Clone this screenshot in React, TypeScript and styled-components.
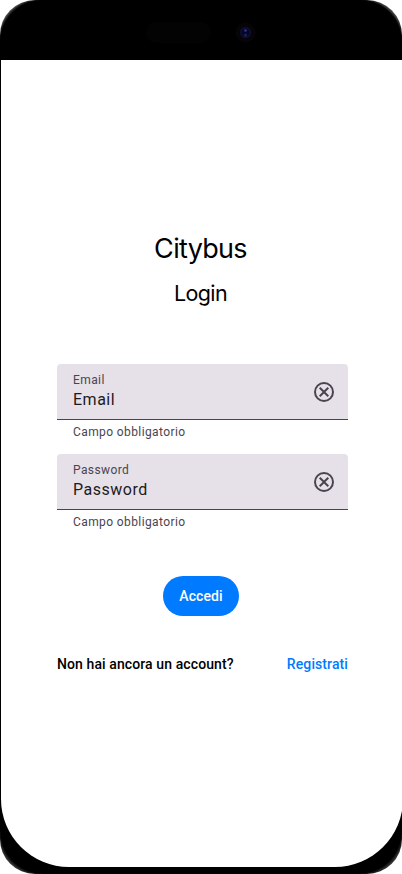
import React from "react";
import styled, { createGlobalStyle } from "styled-components";

const GlobalStyle = createGlobalStyle`
  *, *::before, *::after { box-sizing: border-box; }
  body { margin: 0; background: #fff; overflow: hidden; }
`;

const Device = styled.main`
  width: 402px;
  height: 874px;
  padding: 0 0 7px 1px;
  overflow: hidden;
  border-radius: 35px;
  background:
    radial-gradient(circle at 42px 42px, #000 41.5px, #505050 44.5px) 0 0 / 42px 42px no-repeat,
    radial-gradient(circle at 0 42px, #000 41.5px, #505050 44.5px) 100% 0 / 42px 42px no-repeat,
    radial-gradient(circle at 42px 0, #000 41px, #3c3c3c 44.5px) 0 100% / 42px 42px no-repeat,
    radial-gradient(circle at 0 0, #000 41px, #3c3c3c 44.5px) 100% 100% / 42px 42px no-repeat,
    #000;
  font-family: Roboto, sans-serif;
  display: flex;
  flex-direction: column;
`;

const StatusArea = styled.header`
  flex: none;
  height: 60px;
  padding: 22px 0 0 145px;
  display: flex;
  align-items: flex-start;
`;

const Speaker = styled.div`
  flex: none;
  width: 65px;
  height: 21px;
  border-radius: 11px;
  background: #030303;
`;

const Camera = styled.svg`
  flex: none;
  margin: 0 0 0 24px;
`;

const Screen = styled.section`
  flex: none;
  width: 402px;
  height: 807px;
  padding: 172px 55px 0 56px;
  border-radius: 0 0 68px 68px;
  background: #fff;
  display: flex;
  flex-direction: column;
`;

const Title = styled.h1`
  margin: 0 4px 0 0;
  height: 34px;
  font: 400 27px/34px Inter, sans-serif;
  letter-spacing: -0.7px;
  text-align: center;
  color: #000;
`;

const Subtitle = styled.h2`
  margin: 13px 4px 0 0;
  height: 28px;
  font: 400 21.5px/28px Inter, sans-serif;
  letter-spacing: -0.65px;
  text-align: center;
  color: #000;
`;

const Form = styled.form`
  margin: 57px 0 0;
  display: flex;
  flex-direction: column;
`;

const Field = styled.div`
  height: 90px;
`;

const FieldBox = styled.div`
  height: 56px;
  padding: 8px 12px 7px 16px;
  border-bottom: 1px solid #49454f;
  border-radius: 4px 4px 0 0;
  background: #e6e0e9;
  display: flex;
  align-items: center;
  justify-content: space-between;
`;

const Label = styled.div`
  font-size: 12px;
  line-height: 16px;
  letter-spacing: 0.4px;
  color: #49454f;
`;

const Value = styled.div`
  font-size: 16px;
  line-height: 24px;
  letter-spacing: 0.5px;
  color: #1d1b20;
`;

const Helper = styled(Label)`
  padding: 4px 16px 0;
`;

const Submit = styled.button`
  align-self: center;
  width: 76px;
  height: 40px;
  margin: 32px 3px 0 0;
  padding: 0;
  border: 0;
  border-radius: 20px;
  background: #007aff;
  color: #fff;
  font: 500 14px/20px Roboto, sans-serif;
  letter-spacing: 0.1px;
`;

const Footer = styled.div`
  margin-top: 38px;
  display: flex;
  justify-content: space-between;
  font-size: 14px;
  font-weight: 500;
  line-height: 20px;
  letter-spacing: 0.1px;
  color: #000;
`;

const Register = styled.a`
  color: #007aff;
`;

const ClearIcon = () => (
  <svg width="24" height="24" viewBox="0 0 24 24" fill="#49454f">
    <path d="M8.4 17 12 13.4 15.6 17 17 15.6 13.4 12 17 8.4 15.6 7 12 10.6 8.4 7 7 8.4 10.6 12 7 15.6ZM12 22a10 10 0 1 1 0-20 10 10 0 0 1 0 20Zm0-2a8 8 0 1 0 0-16 8 8 0 0 0 0 16Z" />
  </svg>
);

const TextField = ({ name }: { name: string }) => (
  <Field>
    <FieldBox>
      <div>
        <Label>{name}</Label>
        <Value>{name}</Value>
      </div>
      <ClearIcon />
    </FieldBox>
    <Helper>Campo obbligatorio</Helper>
  </Field>
);

export default function App() {
  return (
    <>
      <GlobalStyle />
      <Device>
        <StatusArea>
          <Speaker />
          <Camera width="21" height="21" viewBox="0 0 21 21">
            <circle cx="10.5" cy="10.5" r="10" fill="#060408" />
            <circle cx="10.5" cy="10.5" r="5.5" fill="#10102a" />
            <circle cx="10.5" cy="10.5" r="3.8" fill="#05052c" />
            <circle cx="10.5" cy="8.5" r="1.3" fill="#33338a" />
            <circle cx="10.5" cy="13" r="1.5" fill="#10295c" />
          </Camera>
        </StatusArea>
        <Screen>
          <Title>Citybus</Title>
          <Subtitle>Login</Subtitle>
          <Form>
            <TextField name="Email" />
            <TextField name="Password" />
            <Submit type="button">Accedi</Submit>
          </Form>
          <Footer>
            <span>Non hai ancora un account?</span>
            <Register>Registrati</Register>
          </Footer>
        </Screen>
      </Device>
    </>
  );
}
